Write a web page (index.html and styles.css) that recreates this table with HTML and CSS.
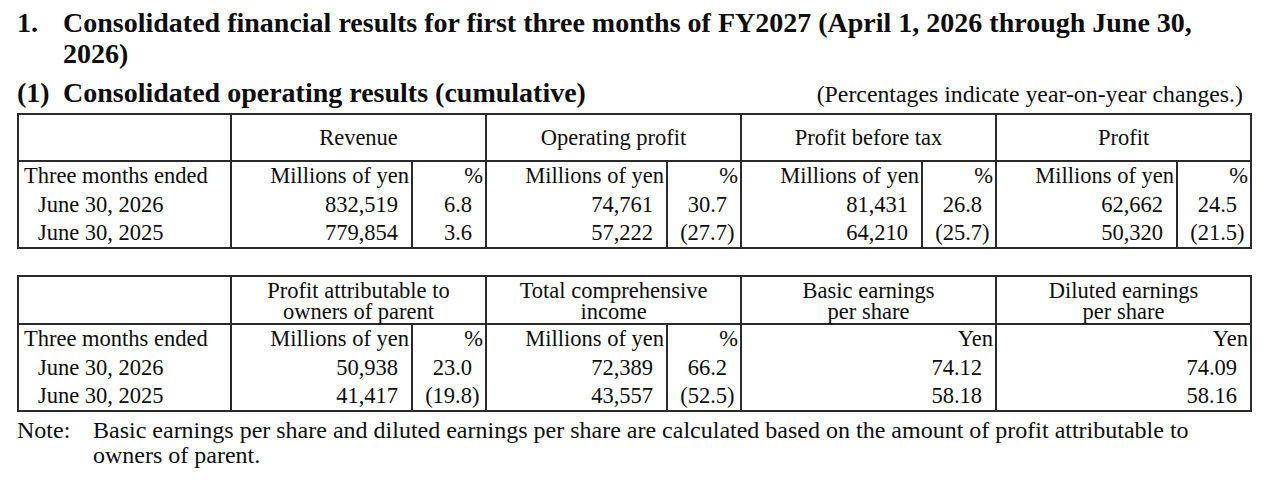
FILE: index.html
```html
<!DOCTYPE html>
<html lang="en">
<head>
<meta charset="utf-8">
<title>Consolidated financial results</title>
<link rel="stylesheet" href="styles.css">
</head>
<body>
<div class="page">
  <div class="hang title">
    <span class="num">1.</span>
    <span class="txt">Consolidated financial results for first three months of FY2027 (April 1, 2026 through June 30, 2026)</span>
  </div>
  <div class="subhead">
    <div class="hang heading">
      <span class="num">(1)</span>
      <span class="txt">Consolidated operating results (cumulative)</span>
    </div>
    <div class="aside">(Percentages indicate year-on-year changes.)</div>
  </div>

  <table class="fin">
    <colgroup>
      <col class="c-label"><col class="c-amt"><col class="c-pct"><col class="c-amt"><col class="c-pct"><col class="c-amt"><col class="c-pct"><col class="c-amt"><col class="c-pct">
    </colgroup>
    <tr class="head">
      <th></th>
      <th colspan="2">Revenue</th>
      <th colspan="2">Operating profit</th>
      <th colspan="2">Profit before tax</th>
      <th colspan="2">Profit</th>
    </tr>
    <tr class="r1">
      <td class="lbl">Three months ended</td>
      <td class="unit">Millions of yen</td><td class="unit">%</td>
      <td class="unit">Millions of yen</td><td class="unit">%</td>
      <td class="unit">Millions of yen</td><td class="unit">%</td>
      <td class="unit">Millions of yen</td><td class="unit">%</td>
    </tr>
    <tr class="r2">
      <td class="lbl sub">June 30, 2026</td>
      <td class="val">832,519</td><td class="val">6.8</td>
      <td class="val">74,761</td><td class="val">30.7</td>
      <td class="val">81,431</td><td class="val">26.8</td>
      <td class="val">62,662</td><td class="val">24.5</td>
    </tr>
    <tr class="r3">
      <td class="lbl sub">June 30, 2025</td>
      <td class="val">779,854</td><td class="val">3.6</td>
      <td class="val">57,222</td><td class="val">(27.7<span class="rp">)</span></td>
      <td class="val">64,210</td><td class="val">(25.7<span class="rp">)</span></td>
      <td class="val">50,320</td><td class="val">(21.5<span class="rp">)</span></td>
    </tr>
  </table>

  <table class="fin second">
    <colgroup>
      <col class="c-label"><col class="c-amt"><col class="c-pct"><col class="c-amt"><col class="c-pct"><col class="c-wide"><col class="c-wide">
    </colgroup>
    <tr class="head two">
      <th></th>
      <th colspan="2"><div class="hl">Profit attributable to</div><div class="hl">owners of parent</div></th>
      <th colspan="2"><div class="hl">Total comprehensive</div><div class="hl">income</div></th>
      <th><div class="hl">Basic earnings</div><div class="hl">per share</div></th>
      <th><div class="hl">Diluted earnings</div><div class="hl">per share</div></th>
    </tr>
    <tr class="r1">
      <td class="lbl">Three months ended</td>
      <td class="unit">Millions of yen</td><td class="unit">%</td>
      <td class="unit">Millions of yen</td><td class="unit">%</td>
      <td class="unit">Yen</td>
      <td class="unit">Yen</td>
    </tr>
    <tr class="r2">
      <td class="lbl sub">June 30, 2026</td>
      <td class="val">50,938</td><td class="val">23.0</td>
      <td class="val">72,389</td><td class="val">66.2</td>
      <td class="val">74.12</td>
      <td class="val">74.09</td>
    </tr>
    <tr class="r3">
      <td class="lbl sub">June 30, 2025</td>
      <td class="val">41,417</td><td class="val">(19.8<span class="rp">)</span></td>
      <td class="val">43,557</td><td class="val">(52.5<span class="rp">)</span></td>
      <td class="val">58.18</td>
      <td class="val">58.16</td>
    </tr>
  </table>

  <div class="note">
    <span class="note-key">Note:</span>
    <span class="note-txt">Basic earnings per share and diluted earnings per share are calculated based on the amount of profit attributable to owners of parent.</span>
  </div>
</div>
</body>
</html>
```

FILE: styles.css
```css
html, body {
  margin: 0;
  padding: 0;
  background: #ffffff;
}

body {
  font-family: "Liberation Serif", "Times New Roman", serif;
  color: #0d0d0d;
  font-size: 22.5px;
}

.page {
  width: 1234px;
  padding: 7px 0 0 17px;
}

.hang {
  display: grid;
  grid-template-columns: 46px 1fr;
}

.title {
  font-weight: bold;
  font-size: 28px;
  line-height: 31px;
  width: 1200px;
}

.subhead {
  display: flex;
  justify-content: space-between;
  align-items: baseline;
  margin-top: 8px;
  margin-bottom: 5px;
}

.heading {
  font-weight: bold;
  font-size: 28px;
  line-height: 31px;
}

.aside {
  font-size: 23.8px;
  padding-right: 8px;
}

.fin {
  border-collapse: collapse;
  table-layout: fixed;
  width: 1234px;
  font-size: 22.5px;
}

.fin.second {
  margin-top: 26px;
}

.c-label { width: 213px; }
.c-amt { width: 181px; }
.c-pct { width: 74px; }
.c-wide { width: 255px; }

.fin th,
.fin td {
  border-left: 2px solid #2a2a2a;
  border-right: 2px solid #2a2a2a;
  padding: 0;
  white-space: nowrap;
}

.fin th {
  font-weight: normal;
  text-align: center;
  border-top: 2px solid #2a2a2a;
  border-bottom: 2px solid #2a2a2a;
  line-height: 28px;
}

.fin .head { height: 47px; }
.fin .head.two { height: 48px; }
.fin .head.two th { line-height: 21px; padding-top: 1px; }

.hl {
  height: 21px;
  line-height: 21px;
}

.fin td { line-height: 28px; }
.fin .r1 { height: 29px; }
.fin .r2 { height: 29px; }
.fin .r3 { height: 29px; }
.fin .r3 td { border-bottom: 2px solid #2a2a2a; }

.lbl {
  text-align: left;
  padding-left: 5px !important;
}

.lbl.sub {
  padding-left: 19px !important;
}

.unit {
  text-align: right;
  padding-right: 2px !important;
}

.val {
  text-align: right;
  padding-right: 13px !important;
}

.rp {
  display: inline-block;
  width: 0;
  overflow: visible;
}

.note {
  display: grid;
  grid-template-columns: 76px 1fr;
  margin-top: 6px;
  line-height: 25px;
  font-size: 24px;
  width: 1200px;
}
```
